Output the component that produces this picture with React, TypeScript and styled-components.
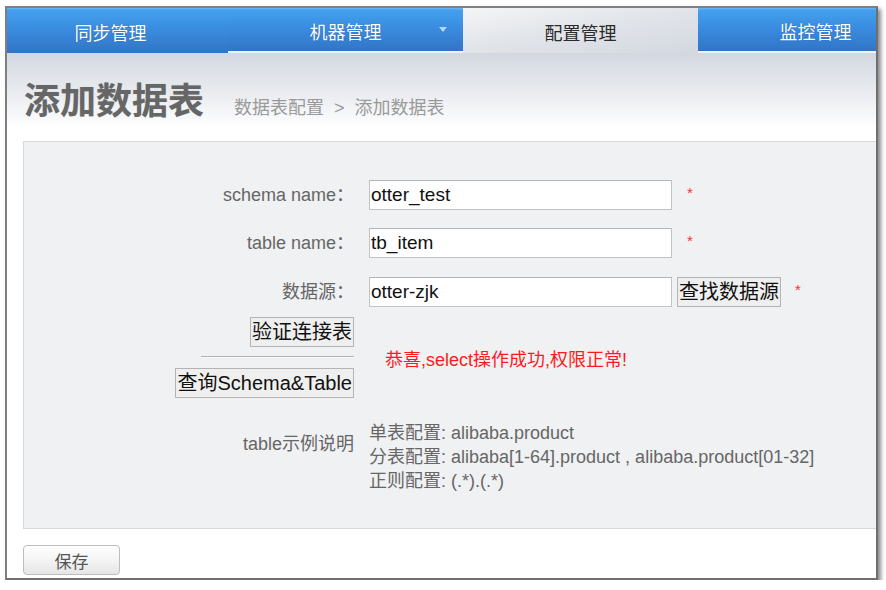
import React from 'react';
import styled, { createGlobalStyle, css } from 'styled-components';

const FONT = `"Liberation Sans", Arial, "Noto Sans CJK SC", sans-serif`;

const GlobalStyle = createGlobalStyle`
  html, body {
    margin: 0;
    padding: 0;
    background: #ffffff;
    font-family: ${FONT};
  }
`;

type Tab = { title: string; active?: boolean; dropdown?: boolean; underline?: boolean };

const TABS: Tab[] = [
  { title: '同步管理' },
  { title: '机器管理', dropdown: true, underline: true },
  { title: '配置管理', active: true },
  { title: '监控管理', underline: true },
];

const EXAMPLES = [
  '单表配置: alibaba.product',
  '分表配置: alibaba[1-64].product , alibaba.product[01-32]',
  '正则配置: (.*).(.*)',
];

export default function App() {
  return (
    <>
      <GlobalStyle />
      <Frame>
        <NavBar>
          {TABS.map((tab) => (
            <NavTab key={tab.title} $active={tab.active} $underline={tab.underline}>
              {tab.title}
              {tab.dropdown && <DropArrow />}
            </NavTab>
          ))}
        </NavBar>

        <Header>
          <Title>添加数据表</Title>
          <Crumbs>数据表配置&nbsp;&nbsp;&gt;&nbsp;&nbsp;添加数据表</Crumbs>
        </Header>

        <Panel>
          <Row $top={38}>
            <Label>schema name：</Label>
            <Field>
              <TextInput defaultValue="otter_test" />
              <Required $gap={15}>*</Required>
            </Field>
          </Row>

          <Row $top={18}>
            <Label>table name：</Label>
            <Field>
              <TextInput defaultValue="tb_item" />
              <Required $gap={15}>*</Required>
            </Field>
          </Row>

          <Row $top={19}>
            <Label>数据源：</Label>
            <Field>
              <TextInput defaultValue="otter-zjk" />
              <PlainButton $gap={5}>查找数据源</PlainButton>
              <Required $gap={14}>*</Required>
            </Field>
          </Row>

          <Row $top={10}>
            <ButtonStack>
              <PlainButton>验证连接表</PlainButton>
              <Divider />
              <PlainButton>查询Schema&amp;Table</PlainButton>
            </ButtonStack>
            <Message>恭喜,select操作成功,权限正常!</Message>
          </Row>

          <Row $top={23}>
            <Label $padTop={11}>table示例说明</Label>
            <Examples>
              {EXAMPLES.map((line) => (
                <ExampleLine key={line}>{line}</ExampleLine>
              ))}
            </Examples>
          </Row>
        </Panel>

        <Footer>
          <SaveButton>保存</SaveButton>
        </Footer>
      </Frame>
    </>
  );
}

const Frame = styled.div`
  margin: 6px 0 0 5px;
  width: 869px;
  height: 570px;
  border: 2px solid #7f7f7f;
  border-right-color: #6f6f6f;
  border-bottom-color: #6f6f6f;
  box-shadow: 3px 3px 4px rgba(0, 0, 0, 0.45);
  background: #ffffff;
  overflow: hidden;
  display: flex;
  flex-direction: column;
`;

const NavBar = styled.div`
  display: flex;
  height: 45px;
  flex-shrink: 0;
  margin-left: -14px;
`;

const NavTab = styled.div<{ $active?: boolean; $underline?: boolean }>`
  position: relative;
  width: 235px;
  flex-shrink: 0;
  box-sizing: border-box;
  display: flex;
  align-items: center;
  justify-content: center;
  padding-top: 2px;
  font-size: 18px;
  color: #ffffff;
  text-shadow: 0 0 1px rgba(20, 60, 120, 0.6);
  background: linear-gradient(#6cbaf6 0, #44a0ee 2px, #3b8fe2 40%, #3274c6 100%);
  ${(p) =>
    p.$underline &&
    css`
      border-bottom: 2px solid #eef3fa;
    `}
  ${(p) =>
    p.$active &&
    css`
      color: #2b2b2b;
      text-shadow: none;
      background: linear-gradient(170deg, #f4f5f7 0%, #e2e5ea 45%, #d3d8e0 100%);
    `}
`;

const DropArrow = styled.span`
  position: absolute;
  right: 16px;
  top: 19px;
  width: 0;
  height: 0;
  border-left: 4px solid transparent;
  border-right: 4px solid transparent;
  border-top: 5px solid rgba(205, 228, 250, 0.85);
`;

const Header = styled.div`
  height: 88px;
  flex-shrink: 0;
  box-sizing: border-box;
  display: flex;
  align-items: baseline;
  padding: 27px 0 0 17px;
  background: linear-gradient(#d3d8e0 0%, #eef0f3 55%, #ffffff 85%);
`;

const Title = styled.h1`
  margin: 0;
  font-size: 36px;
  line-height: 44px;
  font-weight: bold;
  color: #666666;
  text-shadow: 0 0 1px rgba(0, 0, 0, 0.2);
`;

const Crumbs = styled.span`
  margin-left: 30px;
  font-size: 18px;
  color: #9a9a9a;
`;

const Panel = styled.div`
  margin-left: 16px;
  height: 386px;
  flex-shrink: 0;
  border: 1px solid #d5d7da;
  border-right: none;
  background: #f0f1f3;
`;

const Row = styled.div<{ $top: number }>`
  display: flex;
  margin-top: ${(p) => p.$top}px;
`;

const Label = styled.div<{ $padTop?: number }>`
  width: 330px;
  flex-shrink: 0;
  box-sizing: border-box;
  margin-right: 15px;
  text-align: right;
  font-size: 18px;
  line-height: ${(p) => (p.$padTop ? '24px' : '30px')};
  padding-top: ${(p) => p.$padTop ?? 0}px;
  color: #666666;
`;

const Field = styled.div`
  display: flex;
  align-items: flex-start;
`;

const TextInput = styled.input.attrs({ type: 'text' })`
  width: 303px;
  height: 30px;
  box-sizing: border-box;
  margin: 0;
  padding: 0 1px;
  border: 1px solid #c2c2c2;
  border-top-color: #b4b4b4;
  background: #ffffff;
  font-family: ${FONT};
  font-size: 19px;
  color: #111111;
  outline: none;
`;

const Required = styled.span<{ $gap: number }>`
  margin-left: ${(p) => p.$gap}px;
  padding-top: 4px;
  font-size: 15px;
  color: #ff3030;
`;

const PlainButton = styled.button<{ $gap?: number }>`
  margin: 0 0 0 ${(p) => p.$gap ?? 0}px;
  height: 30px;
  padding: 0 1px;
  box-sizing: border-box;
  border: 1px solid #b4b4b4;
  border-radius: 0;
  background: #efefef;
  font-family: ${FONT};
  font-size: 20px;
  line-height: 26px;
  color: #111111;
  cursor: pointer;
  white-space: nowrap;
`;

const ButtonStack = styled.div`
  width: 330px;
  flex-shrink: 0;
  display: flex;
  flex-direction: column;
  align-items: flex-end;
`;

const Divider = styled.div`
  width: 153px;
  margin: 9px 0 10px;
  border-top: 1px solid #b2b2b2;
  border-bottom: 1px solid #fafafa;
`;

const Message = styled.div`
  align-self: center;
  margin-left: 31px;
  font-size: 18px;
  color: #ff1a1a;
`;

const Examples = styled.div`
  display: flex;
  flex-direction: column;
`;

const ExampleLine = styled.div`
  font-size: 18px;
  line-height: 24px;
  color: #666666;
`;

const Footer = styled.div`
  padding: 16px 0 0 16px;
`;

const SaveButton = styled.button`
  width: 97px;
  height: 30px;
  margin: 0;
  padding: 0;
  border: 1px solid #bdbdbd;
  border-radius: 4px;
  background: linear-gradient(#ffffff 0%, #f4f4f4 50%, #e6e6e6 100%);
  font-family: ${FONT};
  font-size: 17px;
  color: #555555;
  cursor: pointer;
`;
